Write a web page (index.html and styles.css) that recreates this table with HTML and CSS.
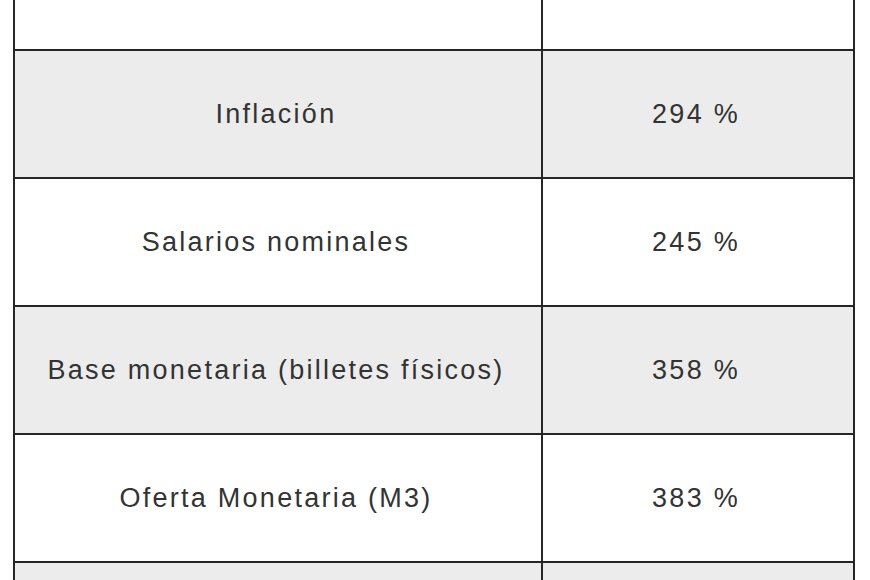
FILE: index.html
```html
<!DOCTYPE html>
<html lang="es">
<head>
<meta charset="utf-8">
<title>Variación</title>
<link rel="stylesheet" href="styles.css">
</head>
<body>
<table class="data">
  <colgroup>
    <col class="c-name">
    <col class="c-val">
  </colgroup>
  <thead>
    <tr class="head"><th>Indicador</th><th>Variación</th></tr>
  </thead>
  <tbody>
    <tr class="alt"><td>Inflación</td><td>294 %</td></tr>
    <tr><td>Salarios nominales</td><td>245 %</td></tr>
    <tr class="alt"><td>Base monetaria (billetes físicos)</td><td>358 %</td></tr>
    <tr><td>Oferta Monetaria (M3)</td><td>383 %</td></tr>
    <tr class="alt"><td>&nbsp;</td><td>&nbsp;</td></tr>
  </tbody>
</table>
</body>
</html>
```
FILE: styles.css
```css
html, body {
  margin: 0;
  padding: 0;
  background: #ffffff;
  overflow: hidden;
}

.data {
  border-collapse: collapse;
  margin: -79px 0 0 13px;
  table-layout: fixed;
  width: 840px;
  font-family: "Liberation Sans", Arial, sans-serif;
  font-size: 27px;
  letter-spacing: 2.25px;
  color: #333333;
}

.c-name { width: 528px; }
.c-val { width: 312px; }

.data th,
.data td {
  border: 2px solid #262626;
  height: 126px;
  padding: 0 4px 0 0;
  text-align: center;
  vertical-align: middle;
  font-weight: normal;
}

.head th {
  vertical-align: top;
  height: 122px;
  padding: 4px 0 0 0;
  color: #333333;
}

.alt td {
  background: #ececec;
}
```
